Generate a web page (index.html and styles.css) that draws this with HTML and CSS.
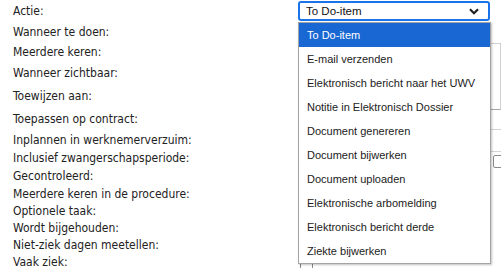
FILE: index.html
```html
<!DOCTYPE html>
<html lang="nl">
<head>
<meta charset="utf-8">
<link rel="stylesheet" href="styles.css">
</head>
<body>
<div class="page">
  <div class="form">
    <div class="label r1">Actie:</div>
    <div class="field r1">
      <div class="select">
        <span>To Do-item</span>
        <svg class="chev" width="10" height="7" viewBox="0 0 10 7"><path d="M1 1.2 L5 5.2 L9 1.2" fill="none" stroke="#222" stroke-width="2.2"/></svg>
      </div>
    </div>
    <div class="label r2">Wanneer te doen:</div>
    <div class="field r2"></div>
    <div class="label r3">Meerdere keren:</div>
    <div class="field r3 span3"><div class="box"></div></div>
    <div class="label r4">Wanneer zichtbaar:</div>
    <div class="label r5">Toewijzen aan:</div>
    <div class="label r6">Toepassen op contract:</div>
    <div class="field r6"></div>
    <div class="label r7">Inplannen in werknemerverzuim:</div>
    <div class="field r7"><div class="box2"></div></div>
    <div class="label r8">Inclusief zwangerschapsperiode:</div>
    <div class="field r8"><span class="check far"></span></div>
    <div class="label r9">Gecontroleerd:</div>
    <div class="label r10">Meerdere keren in de procedure:</div>
    <div class="label r11">Optionele taak:</div>
    <div class="label r12">Wordt bijgehouden:</div>
    <div class="label r13">Niet-ziek dagen meetellen:</div>
    <div class="label r14">Vaak ziek:</div>
    <div class="field r14"><span class="check near"></span></div>
  </div>
  <ul class="menu">
    <li class="active">To Do-item</li>
    <li>E-mail verzenden</li>
    <li>Elektronisch bericht naar het UWV</li>
    <li>Notitie in Elektronisch Dossier</li>
    <li>Document genereren</li>
    <li>Document bijwerken</li>
    <li>Document uploaden</li>
    <li>Elektronische arbomelding</li>
    <li>Elektronisch bericht derde</li>
    <li>Ziekte bijwerken</li>
  </ul>
</div>
</body>
</html>
```
FILE: styles.css
```css
html, body {
  margin: 0;
  padding: 0;
  background: #fff;
  overflow: hidden;
}
.page {
  position: relative;
  width: 501px;
  height: 268px;
}
.form {
  display: grid;
  grid-template-columns: 298px 203px;
  grid-template-rows: 22px 20px 19px 23px 24px 22px 19px 18px 18px 17px 17px 17px 17px 18px;
  font-family: "DejaVu Sans Condensed", "DejaVu Sans", sans-serif;
  font-size: 12px;
  color: #222;
}
.label {
  grid-column: 1;
  padding-left: 13px;
  display: flex;
  align-items: center;
  white-space: nowrap;
}
.field { grid-column: 2; position: relative; }
.r1 { grid-row: 1; }
.r2 { grid-row: 2; }
.r3 { grid-row: 3; }
.r4 { grid-row: 4; }
.r5 { grid-row: 5; }
.r6 { grid-row: 6; }
.r7 { grid-row: 7; }
.r8 { grid-row: 8; }
.r9 { grid-row: 9; }
.r10 { grid-row: 10; }
.r11 { grid-row: 11; }
.r12 { grid-row: 12; }
.r13 { grid-row: 13; }
.r14 { grid-row: 14; }
.span3 { grid-row: 3 / span 3; }
.field.r1 { padding-top: 1px; }
.select {
  box-sizing: border-box;
  width: 192px;
  height: 20px;
  border: 2px solid #1a73e8;
  border-radius: 3px;
  display: flex;
  align-items: center;
  justify-content: space-between;
  padding: 0 9px 0 6px;
  font-family: "Liberation Sans", Arial, sans-serif;
  font-size: 11.5px;
  color: #111;
}
.chev { display: block; }
.box {
  box-sizing: border-box;
  margin-top: 1px;
  height: 67px;
  border: 1px solid #d0d0d0;
  border-bottom-color: #a8a8a8;
}
.box2 {
  box-sizing: border-box;
  height: 23px;
  margin-top: -1px;
  border-top: 1px solid #d4d4d4;
  border-bottom: 1px solid #d4d4d4;
}
.check {
  display: block;
  box-sizing: border-box;
  width: 13px;
  height: 13px;
  border: 1px solid #8a8a8a;
  border-radius: 2px;
  background: #fff;
}
.check.far { margin: 6px 0 0 195px; }
.check.near { margin: 9px 0 0 2px; }
.menu {
  position: absolute;
  left: 298px;
  top: 22px;
  width: 193px;
  margin: 0;
  padding: 0;
  list-style: none;
  box-sizing: border-box;
  border: 1px solid #a4a4a4;
  background: #fff;
  box-shadow: 1px 1px 2px rgba(0,0,0,0.25);
  font-family: "Liberation Sans", Arial, sans-serif;
  font-size: 11px;
  color: #222;
}
.menu li {
  height: 24px;
  line-height: 24px;
  padding-left: 8px;
  white-space: nowrap;
}
.menu li.active {
  background: #1967d2;
  color: #fff;
}
```
